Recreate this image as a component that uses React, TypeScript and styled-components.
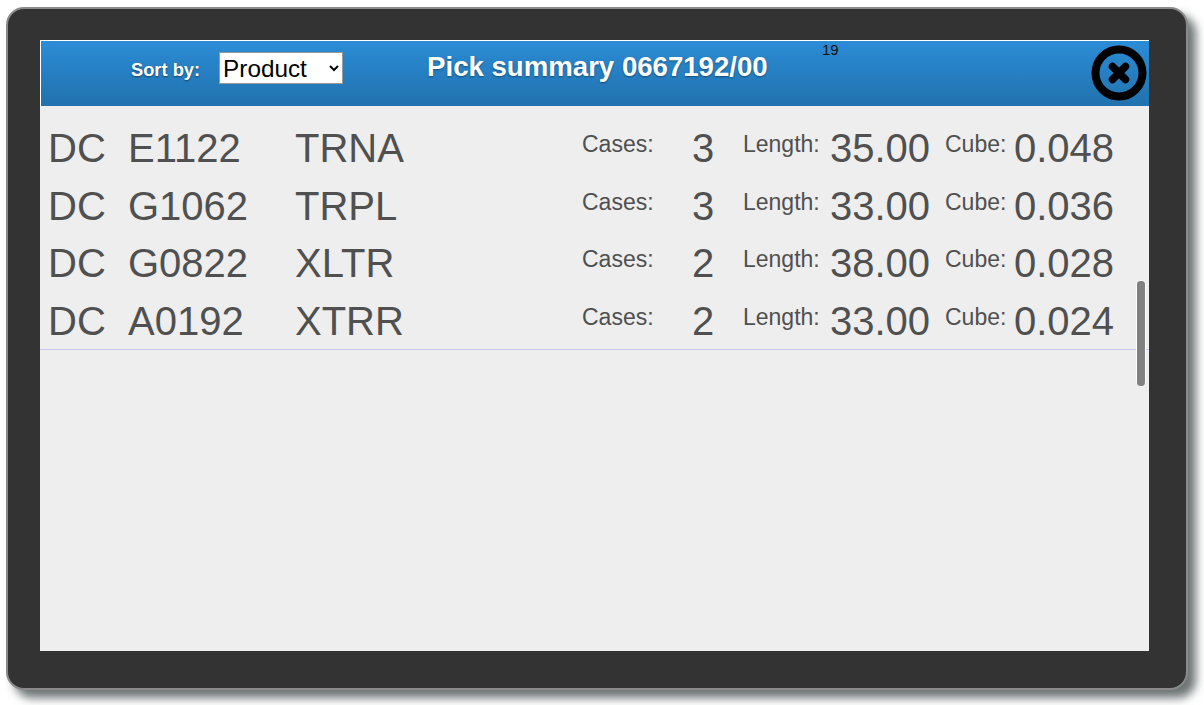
import React from "react";
import styled, { createGlobalStyle } from "styled-components";

const Global = createGlobalStyle`
  html, body { margin: 0; padding: 0; background: #fff; }
  body { font-family: "Liberation Sans", Arial, sans-serif; overflow: hidden; }
`;

const Page = styled.div`
  width: 1204px;
  height: 705px;
  padding: 7px 16px 15px 6px;
  box-sizing: border-box;
`;

const Dialog = styled.div`
  width: 100%;
  height: 100%;
  box-sizing: border-box;
  background: #333;
  border: 2px solid #8a8a8a;
  border-radius: 18px;
  padding: 31px 37px 37px 32px;
  box-shadow: 8px 8px 10px rgba(60, 70, 70, 0.75);
`;

const Panel = styled.div`
  position: relative;
  height: 100%;
  background: #eeeeee;
  display: flex;
  flex-direction: column;
  overflow: hidden;
`;

const Header = styled.header`
  position: relative;
  height: 66px;
  flex: none;
  box-sizing: border-box;
  border-top: 1px solid #fff;
  border-left: 1px solid #fff;
  background: linear-gradient(to bottom, #2b8cd6 0%, #2172ad 100%);
  display: flex;
  align-items: flex-start;
  padding-left: 90px;
  color: #fff;
`;

const SortLabel = styled.label`
  margin-top: 18px;
  font-size: 18.3px;
  line-height: 21px;
  font-weight: bold;
  text-shadow: 0 1px 2px rgba(0, 0, 0, 0.5);
`;

const SortSelect = styled.select`
  margin: 11px 0 0 19px;
  width: 124px;
  height: 32px;
  box-sizing: border-box;
  font-family: "Liberation Sans", Arial, sans-serif;
  font-size: 24.3px;
  color: #000;
  background: #fff;
  border: 1px solid #999;
  border-radius: 0;
  padding: 0 0 0 0;
  text-indent: -1px;
`;

const Title = styled.h1`
  margin: 10px 0 0 84px;
  font-size: 27.6px;
  line-height: 32px;
  font-weight: bold;
  color: #fff;
  text-shadow: 0 1px 2px rgba(0, 0, 0, 0.4);
  white-space: nowrap;
`;

const Counter = styled.span`
  position: absolute;
  left: 781px;
  top: 0;
  font-size: 15px;
  line-height: 17px;
  color: #111;
`;

const CloseButton = styled.button`
  position: absolute;
  right: 2px;
  top: 4px;
  width: 56px;
  height: 56px;
  padding: 0;
  border: 0;
  background: none;
  display: block;
  svg { display: block; }
`;

const List = styled.div`
  padding-top: 13.5px;
  color: #505050;
`;

const Row = styled.div`
  height: 57.5px;
  display: grid;
  grid-template-columns: 80px 167px 287px 110px 51px 87px 115px 69px 1fr;
  align-items: center;
  padding-left: 8px;
  box-sizing: border-box;
  white-space: nowrap;

  &:last-child {
    height: 58px;
    border-bottom: 1px solid #c8c8f0;
  }
`;

const Big = styled.span`
  font-size: 40px;
  line-height: 46px;
`;

const Small = styled.span`
  font-size: 23px;
  line-height: 26px;
  margin-top: -8px;
`;

const Scrollbar = styled.div`
  position: absolute;
  left: 1096px;
  top: 240px;
  width: 10px;
  height: 107px;
  box-sizing: border-box;
  background: #808080;
  border: 1px solid #fff;
  border-radius: 4px;
`;

const rows = [
  ["E1122", "TRNA", "3", "35.00", "0.048"],
  ["G1062", "TRPL", "3", "33.00", "0.036"],
  ["G0822", "XLTR", "2", "38.00", "0.028"],
  ["A0192", "XTRR", "2", "33.00", "0.024"],
];

export default function App() {
  return (
    <Page>
      <Global />
      <Dialog>
        <Panel>
          <Header>
            <SortLabel>Sort by:</SortLabel>
            <SortSelect defaultValue="Product">
              <option>Product</option>
            </SortSelect>
            <Title>Pick summary 0667192/00</Title>
            <Counter>19</Counter>
            <CloseButton aria-label="Close">
              <svg width="56" height="56" viewBox="0 0 56 56">
                <circle cx="28" cy="28" r="23.5" fill="none" stroke="#000" strokeWidth="8" />
                <path d="M21.5 21.5 L34.5 34.5 M34.5 21.5 L21.5 34.5" stroke="#000" strokeWidth="7.5" strokeLinecap="round" />
              </svg>
            </CloseButton>
          </Header>
          <List>
            {rows.map(([code, type, cases, length, cube]) => (
              <Row key={code}>
                <Big>DC</Big>
                <Big>{code}</Big>
                <Big>{type}</Big>
                <Small>Cases:</Small>
                <Big>{cases}</Big>
                <Small>Length:</Small>
                <Big>{length}</Big>
                <Small>Cube:</Small>
                <Big>{cube}</Big>
              </Row>
            ))}
          </List>
          <Scrollbar />
        </Panel>
      </Dialog>
    </Page>
  );
}
